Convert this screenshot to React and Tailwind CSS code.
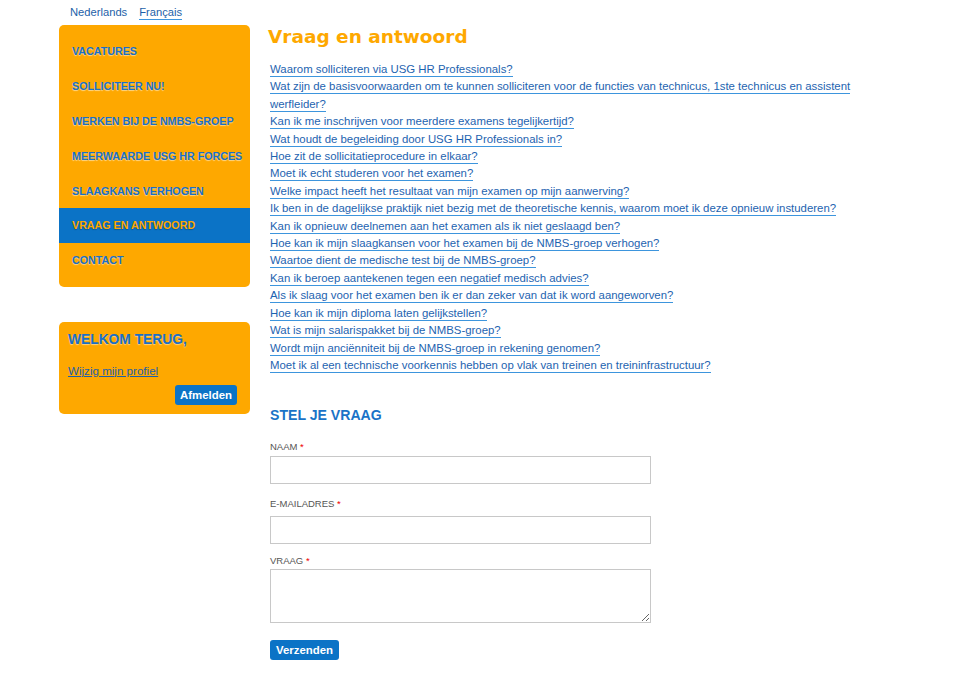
import React from 'react';

const menu = [
  'Vacatures',
  'Solliciteer nu!',
  'Werken bij de NMBS-groep',
  'Meerwaarde USG HR Forces',
  'Slaagkans verhogen',
  'Vraag en antwoord',
  'Contact',
];

const questions = [
  'Waarom solliciteren via USG HR Professionals?',
  'Wat zijn de basisvoorwaarden om te kunnen solliciteren voor de functies van technicus, 1ste technicus en assistent werfleider?',
  'Kan ik me inschrijven voor meerdere examens tegelijkertijd?',
  'Wat houdt de begeleiding door USG HR Professionals in?',
  'Hoe zit de sollicitatieprocedure in elkaar?',
  'Moet ik echt studeren voor het examen?',
  'Welke impact heeft het resultaat van mijn examen op mijn aanwerving?',
  'Ik ben in de dagelijkse praktijk niet bezig met de theoretische kennis, waarom moet ik deze opnieuw instuderen?',
  'Kan ik opnieuw deelnemen aan het examen als ik niet geslaagd ben?',
  'Hoe kan ik mijn slaagkansen voor het examen bij de NMBS-groep verhogen?',
  'Waartoe dient de medische test bij de NMBS-groep?',
  'Kan ik beroep aantekenen tegen een negatief medisch advies?',
  'Als ik slaag voor het examen ben ik er dan zeker van dat ik word aangeworven?',
  'Hoe kan ik mijn diploma laten gelijkstellen?',
  'Wat is mijn salarispakket bij de NMBS-groep?',
  'Wordt mijn anciënniteit bij de NMBS-groep in rekening genomen?',
  'Moet ik al een technische voorkennis hebben op vlak van treinen en treininfrastructuur?',
];

const Label = ({ children }) => (
  <div className="text-[9.5px] uppercase text-[#555] leading-[12px]">
    {children} <span className="text-[#e00]">*</span>
  </div>
);

export default function App() {
  return (
    <div className="min-h-[695px] bg-white font-['Liberation_Sans',Arial,sans-serif]">
      <div className="flex pl-[59px] gap-[20px]">
        <aside className="w-[191px] shrink-0">
          <div className="h-[25px] pl-[11px] flex items-center gap-3 text-[11.2px] text-[#1d5fa8]">
            <span>Nederlands</span>
            <span className="border-b border-[#3d95dd] leading-[14px]">Français</span>
          </div>

          <nav className="bg-[#fea800] rounded-[5px] py-[9px]">
            {menu.map((item) => {
              const active = item === 'Vraag en antwoord';
              return (
                <div
                  key={item}
                  className={`h-[34.8px] flex items-center pl-[13px] text-[10.7px] font-bold uppercase ${
                    active
                      ? 'bg-[#0b73c6] text-[#fea800] [text-shadow:0_1px_1px_rgba(0,0,0,0.25)]'
                      : 'text-[#1a6fc6] [text-shadow:0_1px_1px_rgba(255,255,255,0.55)]'
                  }`}
                >
                  {item}
                </div>
              );
            })}
          </nav>

          <div className="mt-[35px] bg-[#fea800] rounded-[5px] px-[9px] pt-[9px] pb-[9px]">
            <div className="text-[13.8px] font-bold text-[#1a6fc6] leading-[18px] [text-shadow:0_1px_1px_rgba(255,255,255,0.5)]">
              WELKOM TERUG,
            </div>
            <div className="mt-[15px] text-[11.6px] text-[#1d5fa8] underline leading-[14px]">Wijzig mijn profiel</div>
            <div className="flex justify-end mt-[7px] pr-[4px]">
              <button className="bg-[#0b73c6] text-white text-[11.4px] font-bold rounded-[3px] px-[5px] h-[20px] leading-[20px]">
                Afmelden
              </button>
            </div>
          </div>
        </aside>

        <main className="w-[595px] pt-[22px]">
          <h1 className="font-['DejaVu_Sans',Verdana,sans-serif] font-bold text-[18.5px] leading-[30px] text-[#fea800] -ml-[2px]">
            Vraag en antwoord
          </h1>

          <ul className="mt-[9px] text-[11.4px] leading-[17.4px]">
            {questions.map((q) => (
              <li key={q}>
                <a href="#" className="text-[#1d63b0] border-b border-[#3d95dd] pb-[1px]">
                  {q}
                </a>
              </li>
            ))}
          </ul>

          <h2 className="mt-[31px] text-[14.1px] font-bold text-[#1a73c7] leading-[20px]">STEL JE VRAAG</h2>

          <form className="mt-[16px]">
            <Label>Naam</Label>
            <input className="block mt-[3px] w-[381px] h-[28px] border border-[#c8c8c8] bg-white" />

            <div className="mt-[14px]">
              <Label>E-mailadres</Label>
            </div>
            <input className="block mt-[6px] w-[381px] h-[28px] border border-[#c8c8c8] bg-white" />

            <div className="mt-[11px]">
              <Label>Vraag</Label>
            </div>
            <textarea className="block mt-[2px] w-[381px] h-[54px] border border-[#c8c8c8] bg-white" />

            <button
              type="button"
              className="block mt-[17px] bg-[#0b73c6] text-white text-[11.4px] font-bold rounded-[3px] px-[6px] h-[20px] leading-[20px]"
            >
              Verzenden
            </button>
          </form>
        </main>
      </div>
    </div>
  );
}
